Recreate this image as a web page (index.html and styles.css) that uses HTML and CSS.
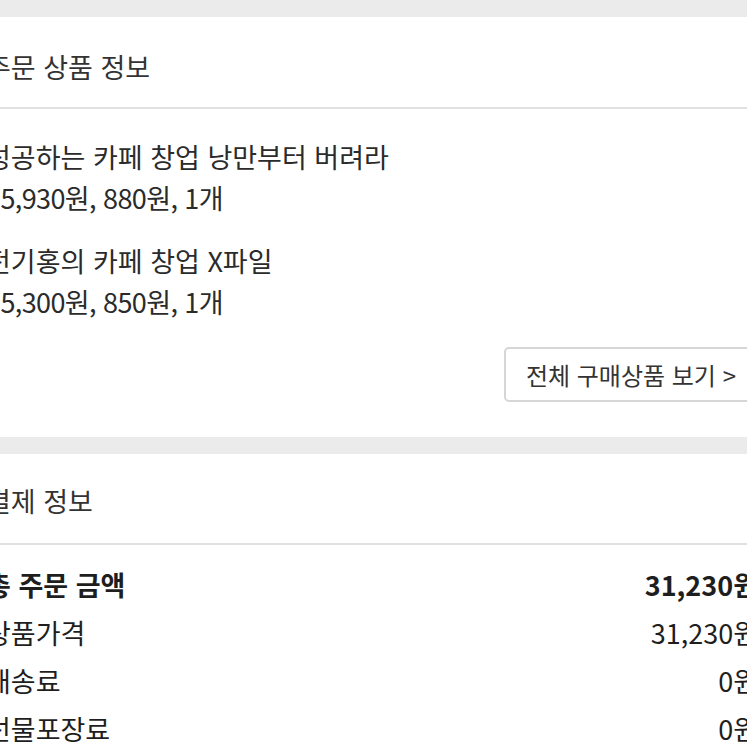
FILE: index.html
```html
<!DOCTYPE html>
<html lang="ko">
<head>
    <meta charset="UTF-8">
    <title>주문 상세</title>
    <link rel="stylesheet" href="styles.css">
</head>
<body>
    <div class="page">
        <div class="band"></div>

        <section class="section">
            <h2 class="section-title">주문 상품 정보</h2>
            <div class="items">
                <div class="item">
                    <p class="item-name">성공하는 카페 창업 낭만부터 버려라</p>
                    <p class="item-price">15,930원, 880원, 1개</p>
                </div>
                <div class="item">
                    <p class="item-name">전기홍의 카페 창업 X파일</p>
                    <p class="item-price">15,300원, 850원, 1개</p>
                </div>
                <div class="more">
                    <button class="more-btn">전체 구매상품 보기 &gt;</button>
                </div>
            </div>
        </section>

        <div class="band"></div>

        <section class="section">
            <h2 class="section-title pay-title">결제 정보</h2>
            <div class="rows">
                <div class="row total">
                    <span>총 주문 금액</span>
                    <span>31,230원</span>
                </div>
                <div class="row">
                    <span>상품가격</span>
                    <span>31,230원</span>
                </div>
                <div class="row">
                    <span>배송료</span>
                    <span>0원</span>
                </div>
                <div class="row">
                    <span>선물포장료</span>
                    <span>0원</span>
                </div>
            </div>
        </section>
    </div>
</body>
</html>
```

FILE: styles.css
```css
* {
    box-sizing: border-box;
}

body {
    margin: 0;
    background-color: #fff;
    overflow: hidden;
    font-family: "Noto Sans CJK KR", "Noto Sans", sans-serif;
    color: #2b2b2b;
}

.page {
    width: 772px;
    margin-left: -14px;
}

.band {
    height: 17px;
    background-color: #ebebeb;
}

.section-title {
    margin: 0;
    padding: 30px 0 20px;
    font-size: 27px;
    font-weight: 400;
    line-height: 40px;
    color: #333;
    border-bottom: 2px solid #e0e0e0;
}

.pay-title {
    padding: 27px 0 22px;
}

.items {
    padding: 27px 0 35px;
}

.item {
    margin-bottom: 22px;
}

.item p {
    margin: 0;
    font-size: 27px;
    line-height: 41px;
}

.item .item-price {
    letter-spacing: -0.6px;
}

.more {
    display: flex;
    justify-content: flex-end;
    padding-top: 3px;
}

.more-btn {
    height: 55px;
    padding: 0 20px;
    font-family: inherit;
    font-size: 24px;
    color: #333;
    background-color: #fff;
    border: 2px solid #d6d6d6;
    border-radius: 5px;
}

.rows {
    padding-top: 16px;
}

.row {
    display: flex;
    justify-content: space-between;
    font-size: 27px;
    line-height: 48px;
    color: #1e1e1e;
}

.row.total {
    font-weight: 700;
}
```
